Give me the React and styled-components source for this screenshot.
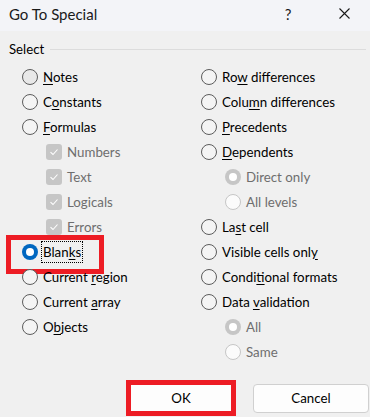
import React from 'react';
import styled, { createGlobalStyle, css } from 'styled-components';

const GlobalStyle = createGlobalStyle`
    html, body {
        margin: 0;
        padding: 0;
        background: #f0f0f0;
    }
    body {
        width: 370px;
        height: 417px;
        overflow: hidden;
        font-family: Lato, "Noto Sans", sans-serif;
        color: #000000;
    }
`;

// '&' marks the accelerator letter
const leftItems = [
    { label: '&Notes', type: 'radio', hover: true },
    { label: 'C&onstants', type: 'radio' },
    { label: '&Formulas', type: 'radio' },
    { label: 'Numbers', type: 'check', indent: true, checked: true, disabled: true },
    { label: 'Text', type: 'check', indent: true, checked: true, disabled: true },
    { label: 'Logicals', type: 'check', indent: true, checked: true, disabled: true },
    { label: 'Errors', type: 'check', indent: true, checked: true, disabled: true },
    { label: 'Blan&ks', type: 'radio', checked: true, focused: true, marked: true },
    { label: 'Current &region', type: 'radio' },
    { label: 'Current &array', type: 'radio' },
    { label: 'O&bjects', type: 'radio' },
];

const rightItems = [
    { label: 'Ro&w differences', type: 'radio' },
    { label: 'Colu&mn differences', type: 'radio' },
    { label: '&Precedents', type: 'radio' },
    { label: '&Dependents', type: 'radio' },
    { label: 'Direct only', type: 'radio', indent: true, checked: true, disabled: true },
    { label: 'All levels', type: 'radio', indent: true, disabled: true },
    { label: 'La&st cell', type: 'radio' },
    { label: 'Visible cells onl&y', type: 'radio' },
    { label: 'Condi&tional formats', type: 'radio' },
    { label: 'Data &validation', type: 'radio' },
    { label: 'All', type: 'radio', indent: true, checked: true, disabled: true },
    { label: 'Same', type: 'radio', indent: true, disabled: true },
];

const Label = ({ text }) => {
    const i = text.indexOf('&');
    if (i < 0) return text;
    return (
        <>
            {text.slice(0, i)}
            <u>{text[i + 1]}</u>
            {text.slice(i + 2)}
        </>
    );
};

const Option = ({ item }) => {
    const control = item.type === 'check'
        ? (
            <Check $disabled={item.disabled}>
                {item.checked && (
                    <svg width="10" height="10" viewBox="0 0 10 10">
                        <path d="M1.5 5.2 L4 7.5 L8.5 2.5" fill="none" stroke="#ffffff" strokeWidth="1.1" />
                    </svg>
                )}
            </Check>
        )
        : <Radio $checked={item.checked} $disabled={item.disabled} $hover={item.hover} />;
    return (
        <Row $indent={item.indent}>
            {item.marked && <RedMark />}
            {control}
            <Text $disabled={item.disabled} $focused={item.focused}>
                <Label text={item.label} />
            </Text>
        </Row>
    );
};

const App = () => {
    return (
        <>
            <GlobalStyle />
            <Dialog>
                <TitleBar>
                    <Title>Go To Special</Title>
                    <TitleButtons>
                        <HelpButton>?</HelpButton>
                        <CloseButton>
                            <svg width="11" height="11" viewBox="0 0 11 11">
                                <path d="M0.5 0.5 L10.5 10.5 M10.5 0.5 L0.5 10.5" stroke="#1a1a1a" strokeWidth="1.1" />
                            </svg>
                        </CloseButton>
                    </TitleButtons>
                </TitleBar>
                <Body>
                    <GroupHeader>
                        <GroupTitle>Select</GroupTitle>
                        <GroupLine />
                    </GroupHeader>
                    <Columns>
                        <Column>
                            {leftItems.map((item) => <Option key={item.label} item={item} />)}
                        </Column>
                        <Column>
                            {rightItems.map((item) => <Option key={item.label} item={item} />)}
                        </Column>
                    </Columns>
                    <ButtonBar>
                        <DialogButton $marked>OK</DialogButton>
                        <DialogButton>Cancel</DialogButton>
                    </ButtonBar>
                </Body>
            </Dialog>
        </>
    );
};

const Dialog = styled.div`
    width: 370px;
    height: 417px;
    background: #f0f0f0;
    display: flex;
    flex-direction: column;
`;

const TitleBar = styled.div`
    height: 31px;
    background: #f3f4f8;
    display: flex;
    align-items: center;
    justify-content: space-between;
    padding-left: 9px;
`;

const Title = styled.div`
    font-size: 15px;
    color: #1a1a1a;
    margin-top: -4px;
`;

const TitleButtons = styled.div`
    display: flex;
    align-items: center;
    margin-top: -4px;
`;

const HelpButton = styled.div`
    width: 62px;
    text-align: center;
    font-size: 15px;
    color: #1a1a1a;
`;

const CloseButton = styled.div`
    width: 50px;
    display: flex;
    justify-content: center;
    padding-right: 1px;
`;

const Body = styled.div`
    flex: 1;
    display: flex;
    flex-direction: column;
    padding: 8px 0 0 9px;
`;

const GroupHeader = styled.div`
    display: flex;
    align-items: center;
    height: 20px;
    gap: 6px;
    padding-right: 4px;
`;

const GroupTitle = styled.div`
    font-size: 13.2px;
`;

const GroupLine = styled.div`
    flex: 1;
    height: 1px;
    background: #dcdcdc;
`;

const Columns = styled.div`
    display: grid;
    grid-template-columns: 179px 1fr;
    padding-left: 13px;
    margin-top: 5px;
`;

const Column = styled.div`
    display: flex;
    flex-direction: column;
`;

const Row = styled.div`
    position: relative;
    height: 25px;
    display: flex;
    align-items: center;
    padding-left: ${(p) => (p.$indent ? '24px' : '0')};
    gap: 3px;
`;

const RedMark = styled.div`
    position: absolute;
    left: -16px;
    top: -4px;
    width: 98px;
    height: 39px;
    box-sizing: border-box;
    border: 5px solid #ed1c24;
    pointer-events: none;
`;

const Radio = styled.span`
    width: 16px;
    height: 16px;
    box-sizing: border-box;
    border-radius: 50%;
    flex-shrink: 0;
    border: 1px solid #5c5c5c;
    background: ${(p) => (p.$hover ? '#e8e8e8' : '#f4f4f4')};
    position: relative;
    ${(p) => p.$disabled && css`
        border-color: #c6c6c6;
        background: #fbfbfb;
    `}
    ${(p) => p.$checked && css`
        border: none;
        background: ${p.$disabled ? '#c6c6c6' : '#0067c0'};
        &::after {
            content: '';
            position: absolute;
            left: 4px;
            top: 4px;
            width: 8px;
            height: 8px;
            border-radius: 50%;
            background: #ffffff;
        }
    `}
`;

const Check = styled.span`
    width: 16px;
    height: 16px;
    box-sizing: border-box;
    border-radius: 3px;
    flex-shrink: 0;
    background: ${(p) => (p.$disabled ? '#c6c6c6' : '#0067c0')};
    display: flex;
    align-items: center;
    justify-content: center;
`;

const Text = styled.span`
    font-size: 13.3px;
    line-height: 20px;
    white-space: nowrap;
    color: ${(p) => (p.$disabled ? '#6e6e6e' : '#000000')};
    padding: 0 1px;
    border: 1px dotted ${(p) => (p.$focused ? '#000000' : 'transparent')};
    u {
        text-underline-offset: 2px;
    }
`;

const ButtonBar = styled.div`
    display: flex;
    justify-content: flex-end;
    align-items: center;
    gap: 17px;
    margin-top: 16px;
    padding-right: 1px;
`;

const DialogButton = styled.button`
    font-family: inherit;
    font-size: 13.3px;
    color: #000000;
    background: #fdfdfd;
    box-sizing: border-box;
    cursor: default;
    ${(p) => (p.$marked
        ? css`
            width: 110px;
            height: 36px;
            border: 5px solid #ed1c24;
            border-radius: 0;
        `
        : css`
            width: 116px;
            height: 29px;
            border: 1px solid #d0d0d0;
            border-radius: 4px;
        `)}
`;

export default App;
